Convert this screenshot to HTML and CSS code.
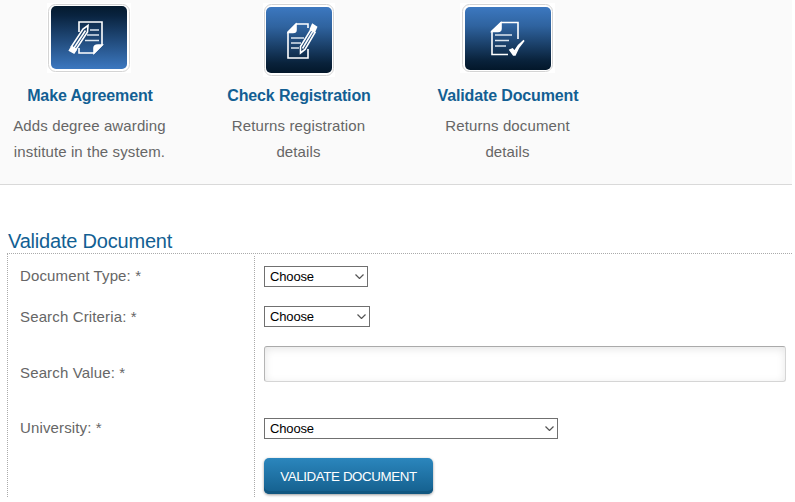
FILE: index.html
```html
<!DOCTYPE html>
<html lang="en">
<head>
<meta charset="utf-8">
<title>Validate Document</title>
<link rel="stylesheet" href="styles.css">
</head>
<body>
<main class="page">
  <nav class="services">
    <a class="service">
      <svg class="tile tile-agreement" width="84" height="70" viewBox="0 0 84 70">
        <defs><linearGradient id="rise" x2="0" y2="1"><stop offset="0" stop-color="#041a2e"/><stop offset=".15" stop-color="#09233f"/><stop offset="1" stop-color="#3c78c0"/></linearGradient></defs>
        <rect width="84" height="70" fill="#fff"/>
        <rect x="1.5" y="1.5" width="81" height="67" rx="7" fill="#fff" stroke="#d4d4d4"/>
        <rect x="4" y="3" width="76" height="63" rx="5" fill="url(#rise)"/>
        <g fill="none" stroke="#fff" stroke-width="1.6">
          <path d="M32 29V19H55V42L47 50H32V45"/>
          <path d="M43 27H52M40 32H52M38 37.500H52" stroke="#dce5ee"/>
          <path d="M47 50V45Q47 42 51 42H55Z" fill="#fff"/>
          <path d="M41 22.500L36 26L24.500 43.500L29 46.500L40.500 29Z"/>
          <path d="M38.500 27.500L27 45"/>
          <path d="M24.500 44L29 47L27 50L22.500 47.500Z" fill="#fff"/>
        </g>
      </svg>
      <h3>Make Agreement</h3>
      <p>Adds degree awarding institute in the system.</p>
    </a>
    <a class="service">
      <svg class="tile" width="72" height="74" viewBox="0 0 72 74">
        <defs><linearGradient id="fall" x2="0" y2="1"><stop offset="0" stop-color="#3c78c0"/><stop offset=".3" stop-color="#2f639f"/><stop offset=".85" stop-color="#09223b"/><stop offset="1" stop-color="#03172a"/></linearGradient></defs>
        <rect width="72" height="74" fill="#fff"/>
        <rect x="1.500" y="1.500" width="69" height="71" rx="7" fill="#fff" stroke="#d4d4d4"/>
        <rect x="3" y="4" width="66" height="66" rx="5" fill="url(#fall)"/>
        <g fill="none" stroke="#fff" stroke-width="1.600">
          <path d="M45 25V21H33L25 29V55H45V46"/>
          <path d="M25.500 29.500L33 21.500V27Q33 29.500 30 29.500Z" fill="#fff"/>
          <path d="M28 35H41M28 40H38M28 45H36" stroke="#dce5ee"/>
          <path d="M37.500 50V43.500L48 26.500L52 29.500L42 46.500Z"/>
          <path d="M50 28L39.500 45.500"/>
          <path d="M47.500 26L49.500 21.500L53.500 24L51.500 28.500Z" fill="#fff"/>
        </g>
      </svg>
      <h3>Check Registration</h3>
      <p>Returns registration details</p>
    </a>
    <a class="service">
      <svg class="tile tile-document" width="95" height="70" viewBox="0 0 95 70">
        <rect width="95" height="70" fill="#fff"/>
        <rect x="2.500" y="1.500" width="90" height="67" rx="7" fill="#fff" stroke="#d4d4d4"/>
        <rect x="5" y="4" width="86" height="63" rx="5" fill="url(#fall)"/>
        <g fill="none" stroke="#fff" stroke-width="1.600">
          <path d="M58 36V19.500H41L32 28V51.500H48"/>
          <path d="M32 28.500L41 20V25.500Q41 28.500 38 28.500Z" fill="#fff"/>
          <path d="M35 32H52M35 37.500H49M35 43H46" stroke="#dce5ee"/>
          <path d="M50 47L52.500 46L54.500 48.500Q58 42 64 37.500Q58 44 55 52H53.500Z" fill="#fff"/>
        </g>
      </svg>
      <h3>Validate Document</h3>
      <p>Returns document details</p>
    </a>
  </nav>
  <section class="content">
    <h2>Validate Document</h2>
    <form class="form">
      <div class="labels">
        <label for="type">Document Type: *</label>
        <label for="criteria">Search Criteria: *</label>
        <label for="value" class="value-label">Search Value: *</label>
        <label for="university">University: *</label>
      </div>
      <div class="fields">
        <div class="select type"><select id="type"><option>Choose</option></select><svg class="chevron" viewBox="0 0 9 5"><path d="M.5 .5L4.500 4.500L8.500 .5"/></svg></div>
        <div class="select criteria"><select id="criteria"><option>Choose</option></select><svg class="chevron" viewBox="0 0 9 5"><path d="M.5 .5L4.500 4.500L8.500 .5"/></svg></div>
        <input id="value" class="value" type="text">
        <div class="select university"><select id="university"><option>Choose</option></select><svg class="chevron" viewBox="0 0 9 5"><path d="M.5 .5L4.500 4.500L8.500 .5"/></svg></div>
        <button class="submit" type="button">VALIDATE DOCUMENT</button>
      </div>
    </form>
  </section>
</main>
</body>
</html>
```
FILE: styles.css
```css
* { box-sizing: border-box; }
html { background: #fff; }
body { margin: 0; overflow: hidden; font: 15px/26px "Liberation Sans", Arial, sans-serif; color: #666; }
.page { width: 792px; height: 498px; overflow: hidden; }
h2, h3, p { margin: 0; }

.services { display: flex; gap: 43px; height: 185px; padding: 3px 7px 0; background: #fafafa; border-bottom: 1px solid #d9d9d9; }
.service { display: grid; grid-template-rows: 80px 30px auto; justify-items: center; width: 166px; text-align: center; }
.service h3 { font-size: 16px; line-height: 26px; letter-spacing: -.13px; color: #125f93; white-space: nowrap; }
.service p { letter-spacing: .12px; margin-right: 1px; }
.tile { display: block; }
.tile-agreement { margin-right: 2px; }
.tile-document { margin-right: 1px; }

.content { padding: 43px 0 0 7px; }
.content h2 { height: 25px; padding-left: 1px; font-size: 20px; line-height: 26px; font-weight: 400; letter-spacing: -.2px; color: #125f93; }
.form { display: flex; height: 260px; border-top: 1px dotted #aaa; border-left: 1px dotted #aaa; }
.labels { display: flex; flex-direction: column; width: 246px; padding: 9px 0 0 12px; letter-spacing: .14px; }
.labels label { height: 26px; margin-bottom: 15px; }
.labels .value-label { margin: 15px 0 29px; }
.fields { display: flex; flex-direction: column; align-items: flex-start; flex: 1; margin-top: 2px; padding: 10px 0 0 9px; border-left: 1px dotted #aaa; }

.select { display: grid; align-items: center; height: 21px; }
.select select, .select .chevron { grid-area: 1 / 1; }
.select select { appearance: none; width: 100%; height: 21px; margin: 0; padding: 0 5px; border: 1px solid #707070; border-radius: 0; background: #fff; color: #000; font: 13px "Liberation Sans", Arial, sans-serif; letter-spacing: -.15px; }
.chevron { justify-self: end; width: 9px; height: 5px; margin-right: 4px; fill: none; stroke: #555; stroke-width: 1.2; pointer-events: none; }
.type { width: 104px; margin-bottom: 19px; }
.criteria { width: 106px; margin-bottom: 19px; }
.university { width: 294px; margin-bottom: 19px; }
.value { width: 522px; height: 36px; margin: 0 0 36px; padding: 0 8px; border: 1px solid; border-color: #aaa #d5d5d5 #d5d5d5 #b5b5b5; border-radius: 3px; background: #fff; box-shadow: inset 0 2px 8px rgba(0,0,0,.1); }
.submit { width: 169px; height: 36px; padding: 0; border: 0; border-radius: 5px; background: linear-gradient(#2b86bd, #145f8d); box-shadow: inset 0 -3px 0 #125780, 0 1px 3px rgba(0,0,0,.4); color: #fff; font: 13.333px "Liberation Sans", Arial, sans-serif; letter-spacing: -.4px; }
```
